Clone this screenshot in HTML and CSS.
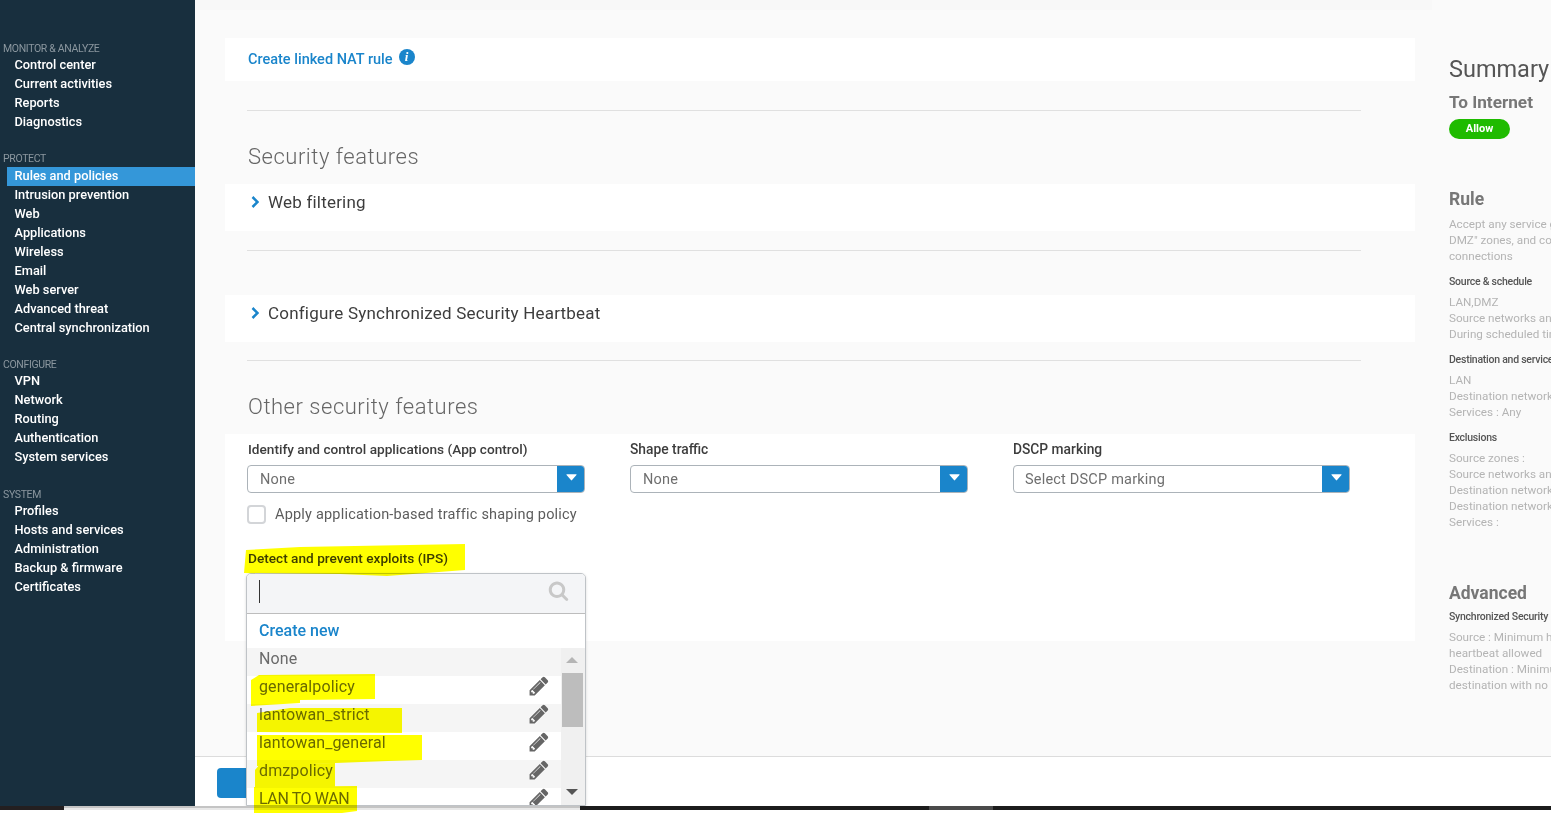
FILE: index.html
```html
<!DOCTYPE html>
<html lang="en">
<head>
<meta charset="utf-8">
<title>Firewall rule</title>
<link rel="stylesheet" href="styles.css">
</head>
<body>
<div class="app">
  <nav class="sidebar">
    <div class="nav-group">
      <div class="nav-label">MONITOR &amp; ANALYZE</div>
      <a class="nav-item">Control center</a>
      <a class="nav-item">Current activities</a>
      <a class="nav-item">Reports</a>
      <a class="nav-item">Diagnostics</a>
    </div>
    <div class="nav-group nav-group-protect">
      <div class="nav-label">PROTECT</div>
      <a class="nav-item active">Rules and policies</a>
      <a class="nav-item">Intrusion prevention</a>
      <a class="nav-item">Web</a>
      <a class="nav-item">Applications</a>
      <a class="nav-item">Wireless</a>
      <a class="nav-item">Email</a>
      <a class="nav-item">Web server</a>
      <a class="nav-item">Advanced threat</a>
      <a class="nav-item">Central synchronization</a>
    </div>
    <div class="nav-group nav-group-configure">
      <div class="nav-label">CONFIGURE</div>
      <a class="nav-item">VPN</a>
      <a class="nav-item">Network</a>
      <a class="nav-item">Routing</a>
      <a class="nav-item">Authentication</a>
      <a class="nav-item">System services</a>
    </div>
    <div class="nav-group nav-group-system">
      <div class="nav-label">SYSTEM</div>
      <a class="nav-item">Profiles</a>
      <a class="nav-item">Hosts and services</a>
      <a class="nav-item">Administration</a>
      <a class="nav-item">Backup &amp; firmware</a>
      <a class="nav-item">Certificates</a>
    </div>
  </nav>

  <div class="workspace">
    <div class="columns">
      <main class="main">
        <section class="panel panel-nat">
          <a class="link">Create linked NAT rule</a>
          <span class="info-icon">i</span>
        </section>
        <hr class="rule rule-first">
        <h2 class="section-title">Security features</h2>
        <section class="panel panel-collapsed">
          <svg class="chevron" viewBox="0 0 8 12"><path d="M1.500 1l5 5-5 5"/></svg>
          <span>Web filtering</span>
        </section>
        <hr class="rule rule-second">
        <section class="panel panel-collapsed panel-heartbeat">
          <svg class="chevron" viewBox="0 0 8 12"><path d="M1.500 1l5 5-5 5"/></svg>
          <span>Configure Synchronized Security Heartbeat</span>
        </section>
        <hr class="rule rule-third">
        <h2 class="section-title">Other security features</h2>
        <section class="panel panel-form">
          <div class="form-grid">
            <div class="field">
              <label class="field-label field-label-long">Identify and control applications (App control)</label>
              <div class="select">
                <span class="select-value">None</span>
                <span class="select-btn"><svg class="select-arrow" viewBox="0 0 12 7"><path d="M1 0h10q1 0 .4.8L6.600 6.300q-.6.7-1.200 0L.6.800Q0 0 1 0z"/></svg></span>
              </div>
              <label class="check-row"><span class="checkbox"></span>Apply application-based traffic shaping policy</label>
            </div>
            <div class="field">
              <label class="field-label">Shape traffic</label>
              <div class="select">
                <span class="select-value">None</span>
                <span class="select-btn"><svg class="select-arrow" viewBox="0 0 12 7"><path d="M1 0h10q1 0 .4.8L6.600 6.300q-.6.7-1.200 0L.6.800Q0 0 1 0z"/></svg></span>
              </div>
            </div>
            <div class="field">
              <label class="field-label">DSCP marking</label>
              <div class="select">
                <span class="select-value">Select DSCP marking</span>
                <span class="select-btn"><svg class="select-arrow" viewBox="0 0 12 7"><path d="M1 0h10q1 0 .4.8L6.600 6.300q-.6.7-1.200 0L.6.800Q0 0 1 0z"/></svg></span>
              </div>
            </div>
          </div>
          <div class="ips-field">
            <label class="field-label field-label-long">Detect and prevent exploits (IPS)</label>
            <div class="popover">
              <div class="popover-search">
                <span class="caret"></span>
                <svg class="search-icon" viewBox="0 0 1792 1792"><path d="M1216 832q0-185-131.500-316.500t-316.500-131.500-316.500 131.500-131.500 316.500 131.500 316.500 316.500 131.500 316.500-131.500 131.500-316.500zm512 832q0 52-38 90t-90 38q-54 0-90-38l-343-342q-179 124-399 124-143 0-273.500-55.500t-225-150-150-225-55.500-273.500 55.500-273.500 150-225 225-150 273.500-55.500 273.500 55.500 225 150 150 225 55.500 273.500q0 220-124 399l343 343q37 37 37 90z"/></svg>
              </div>
              <div class="create-new">Create new</div>
              <div class="list-wrap">
                <ul class="list">
                  <li class="option alt">None</li>
                  <li class="option">generalpolicy<svg class="pencil" viewBox="0 0 1792 1792"><use href="#pencil"/></svg></li>
                  <li class="option alt">lantowan_strict<svg class="pencil" viewBox="0 0 1792 1792"><use href="#pencil"/></svg></li>
                  <li class="option">lantowan_general<svg class="pencil" viewBox="0 0 1792 1792"><use href="#pencil"/></svg></li>
                  <li class="option alt">dmzpolicy<svg class="pencil" viewBox="0 0 1792 1792"><use href="#pencil"/></svg></li>
                  <li class="option option-caps">LAN TO WAN<svg class="pencil" viewBox="0 0 1792 1792"><use href="#pencil"/></svg></li>
                </ul>
                <div class="scrollbar">
                  <span class="scroll-up"></span>
                  <span class="scroll-thumb"></span>
                  <span class="scroll-down"></span>
                </div>
              </div>
            </div>
          </div>
        </section>
      </main>

      <aside class="summary">
        <h1 class="summary-title">Summary</h1>
        <h3 class="summary-name">To Internet</h3>
        <span class="badge">Allow</span>
        <h3 class="summary-head summary-head-rule">Rule</h3>
        <p class="summary-text">Accept any service going<br>DMZ" zones, and connect<br>connections</p>
        <h4 class="summary-sub">Source &amp; schedule</h4>
        <p class="summary-text">LAN,DMZ<br>Source networks and<br>During scheduled time</p>
        <h4 class="summary-sub">Destination and services</h4>
        <p class="summary-text">LAN<br>Destination networks<br>Services : Any</p>
        <h4 class="summary-sub">Exclusions</h4>
        <p class="summary-text">Source zones :<br>Source networks and<br>Destination networks<br>Destination networks<br>Services :</p>
        <h3 class="summary-head summary-head-advanced">Advanced</h3>
        <h4 class="summary-sub summary-sub-tight">Synchronized Security</h4>
        <p class="summary-text">Source : Minimum heartbeat<br>heartbeat allowed<br>Destination : Minimum<br>destination with no heartbeat</p>
      </aside>
    </div>
    <footer class="footer"><button class="primary-btn" type="button"></button></footer>
  </div>
</div>

<div class="hscroll">
  <span class="hscroll-dark hscroll-left"></span>
  <span class="hscroll-light"></span>
  <span class="hscroll-dark hscroll-a"></span>
  <span class="hscroll-thumb"></span>
  <span class="hscroll-dark hscroll-b"></span>
</div>

<svg class="defs" aria-hidden="true"><defs><path id="pencil" d="M491 1536l91-91-235-235-91 91v107h128v128h107zm523-928q0-22-22-22-10 0-17 7l-542 542q-7 7-7 17 0 22 22 22 10 0 17-7l542-542q7-7 7-17zm-54-192l416 416-832 832h-416v-416zm683 96q0 53-37 90l-166 166-416-416 166-165q36-38 90-38 53 0 91 38l235 234q37 39 37 91z"/></defs></svg>

<svg class="marker-layer" viewBox="0 0 1551 813" aria-hidden="true">
  <polygon points="246,550 300,547 465,544 465,570 387,576 340,574 244,573"/>
  <polygon points="251,680 259,675 375,674 375,699 300,700 300,703 251,706"/>
  <polygon points="257,713 290,708 402,708 402,733 257,732"/>
  <polygon points="257,735 422,735 422,760 388,761 257,766"/>
  <polygon points="255,770 260,764 335,763 335,787 255,787"/>
  <polygon points="254,787 357,786 357,811 342,813 254,813"/>
</svg>
</body>
</html>
```
FILE: styles.css
```css
* { box-sizing: border-box; }
html, body { margin: 0; padding: 0; }
body {
  width: 1551px;
  height: 813px;
  overflow: hidden;
  position: relative;
  background: #fff;
  font-family: Roboto, "Liberation Sans", sans-serif;
  color: #4a4a4a;
}
.app { display: flex; height: 806px; overflow: hidden; }

/* sidebar */
.sidebar {
  width: 195px;
  flex: none;
  background: #182f3e;
  padding-top: 39px;
}
.nav-group { margin-top: 18px; }
.nav-group:first-child { margin-top: 0; }
.nav-group-configure { margin-top: 17px; }
.nav-group-system { margin-top: 19px; }
.nav-label {
  height: 16px;
  line-height: 20px;
  padding-left: 3px;
  font-size: 10.500px;
  letter-spacing: -.35px;
  color: #8b979f;
  white-space: nowrap;
}
.nav-group-protect .nav-label { height: 18px; }
.nav-item {
  display: block;
  height: 19px;
  line-height: 19px;
  margin-left: 7px;
  padding-left: 7.500px;
  font-size: 12.800px;
  font-weight: 500;
  color: #fff;
  white-space: nowrap;
}
.nav-group-protect .nav-item { line-height: 17px; }
.nav-item.active { background: #3497d9; }

/* workspace */
.workspace { flex: 1; min-width: 0; display: flex; flex-direction: column; }
.columns { flex: 1; min-height: 0; display: flex; background: #fafafa; }
.main {
  width: 1237px;
  flex: none;
  padding: 28px 17px 0 30px;
  border-top: 10px solid #f8f8f8;
}
.panel { background: #fff; }
.panel-nat {
  height: 43px;
  display: flex;
  align-items: center;
  gap: 6px;
  padding-left: 23px;
}
.link { color: #1a85cb; font-size: 14.500px; font-weight: 500; }
.info-icon {
  width: 16px;
  height: 16px;
  margin-top: -5px;
  border-radius: 50%;
  background: #1a85cb;
  color: #fff;
  font: italic 700 13px/16px "Liberation Serif", serif;
  text-align: center;
}
.rule { border: 0; border-top: 1px solid #e0e0e0; margin: 0 54px 0 22px; }
.rule-first { margin-top: 29px; }
.rule-second { margin-top: 19px; }
.rule-third { margin-top: 18px; }
.section-title {
  margin: 30px 0 0;
  padding-left: 23px;
  font-size: 22px;
  font-weight: 300;
  line-height: 32px;
  letter-spacing: .52px;
  color: #666;
  height: 43px;
}
.panel-collapsed {
  height: 47px;
  display: flex;
  align-items: center;
  gap: 9px;
  padding: 0 0 12px 26px;
  font-size: 17px;
  letter-spacing: .2px;
  color: #3d3d3d;
}
.panel-heartbeat { margin-top: 44px; }
.chevron { width: 8px; height: 12px; fill: none; stroke: #1a85cb; stroke-width: 2.500; flex: none; }

/* form */
.panel-form { height: 207px; padding: 0 0 0 22px; }
.form-grid {
  display: grid;
  grid-template-columns: repeat(3, 338px);
  column-gap: 45px;
  padding-top: 5px;
}
.field-label {
  display: block;
  height: 20px;
  line-height: 20px;
  font-size: 13.800px;
  font-weight: 500;
  color: #3d3d3d;
  white-space: nowrap;
}
.field-label-long { padding-left: 1px; font-size: 13.650px; }
.select {
  display: flex;
  height: 28px;
  margin-top: 6px;
  border: 1px solid #acb3b9;
  border-radius: 4px;
  overflow: hidden;
  background: #fff;
}
.field:last-child .select { margin-right: 1px; }
.select-value {
  flex: 1;
  padding-left: 12px;
  line-height: 28px;
  font-size: 14.500px;
  letter-spacing: .2px;
  color: #6f6f6f;
}
.field:last-child .select-value { padding-left: 11px; }
.select-btn {
  width: 28px;
  margin: -1px;
  background: #1a85cb;
  display: flex;
  justify-content: center;
  padding-top: 9px;
}
.select-arrow { width: 11px; height: 7px; fill: #fff; }
.check-row {
  display: flex;
  align-items: center;
  gap: 9px;
  height: 20px;
  margin-top: 11px;
  font-size: 14.500px;
  letter-spacing: .2px;
  color: #5c5c5c;
  white-space: nowrap;
}
.checkbox {
  width: 19px;
  height: 19px;
  flex: none;
  border: 2px solid #d3d5d8;
  border-radius: 4px;
  background: #fff;
}
.ips-field { position: relative; width: 340px; margin-top: 24px; }
.popover {
  position: absolute;
  top: 25px;
  left: -1px;
  width: 340px;
  height: 233px;
  background: #fff;
  border: 1px solid #bfc3c7;
  border-radius: 5px 5px 0 0;
  box-shadow: 0 1px 3px rgba(0,0,0,.15);
  overflow: hidden;
}
.popover-search {
  height: 40px;
  background: #f4f5f7;
  border-bottom: 1px solid #bdbdbd;
  position: relative;
  padding: 6px 0 0 12px;
}
.caret { display: block; width: 1px; height: 23px; background: #333; }
.search-icon { position: absolute; right: 16px; top: 6px; width: 21px; height: 21px; fill: #c8c8c8; }
.create-new {
  height: 34px;
  line-height: 34px;
  padding-left: 12px;
  font-size: 16px;
  font-weight: 500;
  color: #1a85cb;
}
.list-wrap { display: flex; }
.list { list-style: none; margin: 0; padding: 0; width: 314px; flex: none; }
.option {
  height: 28px;
  line-height: 22px;
  padding-left: 12px;
  font-size: 16px;
  letter-spacing: .12px;
  color: #6a6a6a;
  position: relative;
  background: #fff;
}
.option-caps { letter-spacing: -.4px; }
.option.alt { background: #f5f5f5; }
.pencil {
  position: absolute;
  left: 281px;
  top: -1px;
  width: 22px;
  height: 22px;
  fill: #666;
}
.scrollbar {
  width: 25px;
  height: 160px;
  background: #f0f0f0;
  position: relative;
}
.scroll-up, .scroll-down {
  position: absolute;
  left: 5px;
  width: 0;
  height: 0;
  border-left: 6px solid transparent;
  border-right: 6px solid transparent;
}
.scroll-up { top: 9px; border-bottom: 6px solid #b5b5b5; }
.scroll-down { top: 141px; border-top: 6px solid #555; }
.scroll-thumb {
  position: absolute;
  left: 1px;
  top: 25px;
  width: 21px;
  height: 54px;
  background: #bdbdbd;
}

/* summary */
.summary {
  flex: 1;
  min-width: 0;
  overflow: hidden;
  white-space: nowrap;
  padding: 54px 0 0 17px;
}
.summary-title { margin: 0; font-size: 23.500px; font-weight: 400; line-height: 30px; color: #555; }
.summary-name { margin: 3px 0 0; font-size: 17.200px; font-weight: 700; line-height: 30px; color: #777; }
.badge {
  display: block;
  width: 61px;
  height: 20px;
  margin-top: 2px;
  border-radius: 10px;
  background: #1fbb00;
  color: #fff;
  font-size: 11px;
  font-weight: 700;
  line-height: 19px;
  text-align: center;
}
.summary-head { margin: 0; font-size: 17.500px; font-weight: 700; line-height: 24px; color: #777; }
.summary-head-rule { margin-top: 48px; }
.summary-head-advanced { margin-top: 51px; }
.summary-text { margin: 0; font-size: 11.700px; line-height: 16px; color: #b4b4b4; }
.summary-sub {
  margin: 0;
  height: 27px;
  padding-top: 11px;
  font-size: 10.500px;
  letter-spacing: -.25px;
  font-weight: 500;
  line-height: 14px;
  color: #555;
}
.summary-sub-tight { height: 21px; padding-top: 5px; }
.summary-head-rule + .summary-text { margin-top: 5px; }
.summary-sub + .summary-text { margin-top: 3px; }

/* footer */
.footer {
  height: 50px;
  flex: none;
  background: #fff;
  border-top: 1px solid #dcdcdc;
  padding: 11px 0 0 22px;
}
.primary-btn {
  display: block;
  width: 60px;
  height: 30px;
  border: 0;
  border-radius: 4px;
  background: #1a85cb;
}

/* bottom strip */
.hscroll { display: flex; height: 4px; }
.hscroll-dark { background: #1c1c1c; }
.hscroll-left { width: 64px; background: #231f20; }
.hscroll-light { width: 516px; background: #e8e8e8; border-top: 2px solid #c4c4c4; }
.hscroll-a { width: 349px; }
.hscroll-thumb { width: 64px; background: #4a4a4a; }
.hscroll-b { flex: 1; }

.defs { position: absolute; width: 0; height: 0; }
.marker-layer {
  position: absolute;
  left: 0;
  top: 0;
  width: 1551px;
  height: 813px;
  fill: #ffff00;
  mix-blend-mode: multiply;
  pointer-events: none;
}
```
